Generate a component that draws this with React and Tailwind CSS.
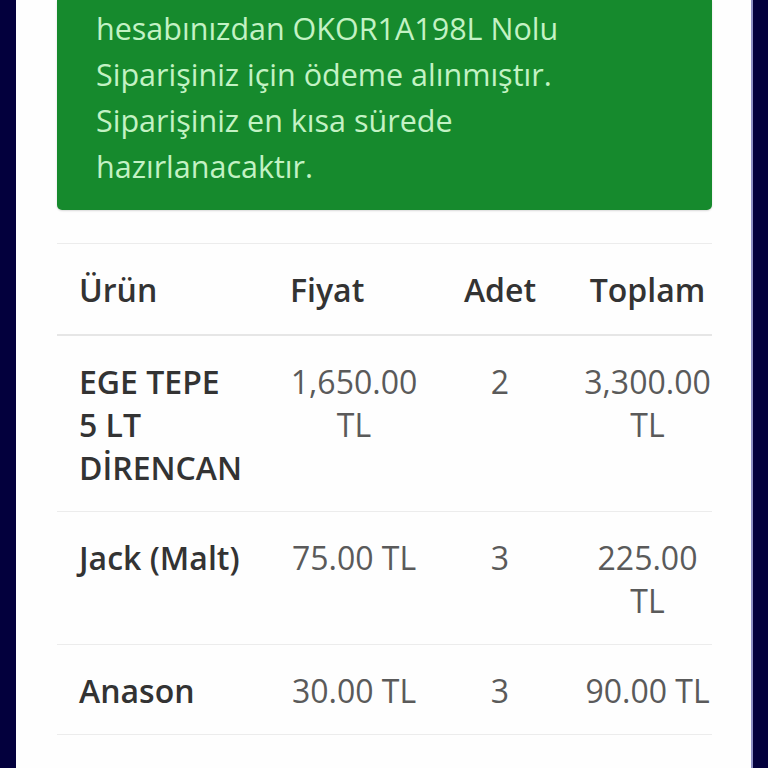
import React from 'react';

const rows = [
  { name: ['EGE TEPE', '5 LT', 'DİRENCAN'], price: ['1,650.00', 'TL'], qty: '2', total: ['3,300.00', 'TL'] },
  { name: ['Jack (Malt)'], price: ['75.00 TL'], qty: '3', total: ['225.00', 'TL'] },
  { name: ['Anason'], price: ['30.00 TL'], qty: '3', total: ['90.00 TL'] },
  { name: ['Kişniş'], price: ['40.00 TL'], qty: '3', total: ['90.00 TL'] },
];

const Lines = ({ items }) => items.map((t, i) => <div key={i}>{t}</div>);

export default function App() {
  return (
    <div
      className="h-[768px] w-[768px] overflow-hidden bg-[#03003d] px-[16px] flex"
      style={{ fontFamily: '"Open Sans", "Noto Sans", sans-serif' }}
    >
      <div className="flex-1 bg-[#fefefe] pl-[41px] pr-[39px] border-r-2 border-[#8d8fc4]">
        <div className="rounded-b-[5px] bg-[#168a2d] pl-[39px] pr-[20px] pt-[5px] pb-[21px] text-[30.5px] leading-[46px] text-[#c3f2c4] shadow-[0_1px_2px_rgba(0,0,0,0.15)]">
          <div>hesabınızdan OKOR1A198L Nolu</div>
          <div>Siparişiniz için ödeme alınmıştır.</div>
          <div>Siparişiniz en kısa sürede</div>
          <div>hazırlanacaktır.</div>
        </div>

        <div className="mt-[33px] w-[655px] border-t border-[#ececec]">
          <div className="grid grid-cols-[211px_172px_120px_175px] border-b-2 border-[#e6e6e6] pt-[24px] pb-[23px] text-[32px] leading-[43px] font-semibold text-[#333]">
            <div className="pl-[22px]">Ürün</div>
            <div className="pl-[22px]">Fiyat</div>
            <div className="text-center">Adet</div>
            <div className="text-center">Toplam</div>
          </div>
          {rows.map((r, i) => (
            <div
              key={i}
              className="grid grid-cols-[211px_172px_120px_175px] border-b border-[#ececec] pt-[24px] pb-[22px] text-[32px] leading-[43px] text-[#5a5a5a]"
            >
              <div className="pl-[22px] font-semibold text-[#333]">
                <Lines items={r.name} />
              </div>
              <div className="text-center">
                <Lines items={r.price} />
              </div>
              <div className="text-center">{r.qty}</div>
              <div className="text-center">
                <Lines items={r.total} />
              </div>
            </div>
          ))}
        </div>
      </div>
    </div>
  );
}
